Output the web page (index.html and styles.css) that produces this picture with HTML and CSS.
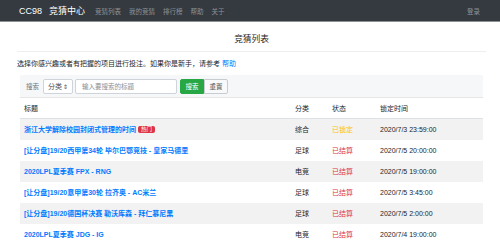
FILE: index.html
```html
<!DOCTYPE html>
<html lang="zh-CN">
<head>
    <meta charset="UTF-8">
    <meta name="viewport" content="width=device-width, initial-scale=1.0">
    <title>CC98 竞猜中心</title>
    <link rel="stylesheet" href="styles.css">
</head>
<body>
    <nav class="navbar">
        <a class="brand" href="#">CC98</a>
        <a class="brand brand-sub" href="#">竞猜中心</a>
        <div class="nav-links">
            <a href="#">竞猜列表</a>
            <a href="#">我的竞猜</a>
            <a href="#">排行榜</a>
            <a href="#">帮助</a>
            <a href="#">关于</a>
        </div>
        <a class="login" href="#">登录</a>
    </nav>

    <div class="container">
        <h2 class="page-title">竞猜列表</h2>
        <p class="intro">选择你感兴趣或者有把握的项目进行投注。如果你是新手，请参考 <a href="#">帮助</a></p>

        <form class="search-bar">
            <span class="search-label">搜索</span>
            <div class="select">分类 <span class="arrows">&#8661;</span></div>
            <input type="text" placeholder="输入要搜索的标题">
            <button type="submit" class="btn-search">搜索</button>
            <button type="button" class="btn-reset">重置</button>
        </form>

        <table class="bet-table">
            <colgroup>
                <col class="col-title">
                <col class="col-cat">
                <col class="col-state">
                <col class="col-time">
            </colgroup>
            <thead>
                <tr>
                    <th>标题</th>
                    <th>分类</th>
                    <th>状态</th>
                    <th>锁定时间</th>
                </tr>
            </thead>
            <tbody>
                <tr>
                    <td><a href="#">浙江大学解除校园封闭式管理的时间</a> <span class="badge">热门</span></td>
                    <td>综合</td>
                    <td class="locked">已锁定</td>
                    <td>2020/7/3 23:59:00</td>
                </tr>
                <tr>
                    <td><a href="#">[让分盘]19/20西甲第34轮 毕尔巴鄂竞技 - 皇家马德里</a></td>
                    <td>足球</td>
                    <td class="settled">已结算</td>
                    <td>2020/7/5 20:00:00</td>
                </tr>
                <tr>
                    <td><a href="#">2020LPL夏季赛 FPX - RNG</a></td>
                    <td>电竞</td>
                    <td class="settled">已结算</td>
                    <td>2020/7/5 19:00:00</td>
                </tr>
                <tr>
                    <td><a href="#">[让分盘]19/20意甲第30轮 拉齐奥 - AC米兰</a></td>
                    <td>足球</td>
                    <td class="settled">已结算</td>
                    <td>2020/7/5 3:45:00</td>
                </tr>
                <tr>
                    <td><a href="#">[让分盘]19/20德国杯决赛 勒沃库森 - 拜仁慕尼黑</a></td>
                    <td>足球</td>
                    <td class="settled">已结算</td>
                    <td>2020/7/5 2:00:00</td>
                </tr>
                <tr>
                    <td><a href="#">2020LPL夏季赛 JDG - IG</a></td>
                    <td>电竞</td>
                    <td class="settled">已结算</td>
                    <td>2020/7/4 19:00:00</td>
                </tr>
            </tbody>
        </table>
    </div>
</body>
</html>
```

FILE: styles.css
```css
body {
    margin: 0;
    font-family: "Liberation Sans", "Noto Sans CJK SC", sans-serif;
    font-size: 7px;
    color: #212529;
    background: #fff;
}
a {
    text-decoration: none;
    color: #007bff;
}
.navbar {
    display: flex;
    align-items: center;
    height: 22px;
    padding: 0 20px 0 19px;
    background-color: #343a40;
    border-bottom: 1px solid #8e9194;
    box-sizing: border-box;
}
.brand {
    color: #fff;
    font-size: 9px;
    margin-right: 7px;
}
.brand-sub {
    margin-right: 10px;
}
.nav-links {
    display: flex;
    gap: 8px;
    flex: 1;
}
.nav-links a,
.login {
    color: rgba(255,255,255,0.45);
    font-size: 6.5px;
}
.container {
    padding: 0 14px 0 17px;
}
.page-title {
    margin: 0;
    padding: 11px 0 6px;
    font-size: 8.7px;
    font-weight: normal;
    text-align: center;
    line-height: 12px;
    border-bottom: 1px solid #eee;
}
.intro {
    margin: 6px 0 0;
    line-height: 11px;
}
.search-bar {
    display: flex;
    align-items: center;
    margin: 6px 3px 0;
    padding: 4px 6px;
    height: 23px;
    box-sizing: border-box;
    background-color: #f6f7f8;
    border-bottom: 1px solid #e6e6e6;
}
.search-label {
    color: #6c757d;
    font-size: 6.5px;
    margin-right: 4px;
}
.select {
    display: flex;
    align-items: center;
    justify-content: space-between;
    width: 30px;
    height: 15px;
    padding: 0 4px;
    box-sizing: border-box;
    background: #fff;
    border: 1px solid #ced4da;
    border-radius: 2px;
    color: #495057;
    margin-right: 2px;
}
.arrows {
    font-size: 6px;
}
.search-bar input {
    width: 102px;
    height: 15px;
    padding: 0 6px;
    box-sizing: border-box;
    border: 1px solid #ced4da;
    border-radius: 2px;
    font: inherit;
    font-size: 6.5px;
    margin-right: 3px;
}
.search-bar input::placeholder {
    color: #8a9097;
}
.search-bar button {
    height: 15px;
    width: 24px;
    padding: 0;
    font: inherit;
    font-size: 6.5px;
    border: 1px solid #28a745;
    cursor: pointer;
}
.btn-search {
    background-color: #28a745;
    color: #fff;
    border-radius: 2px 0 0 2px;
}
.btn-reset {
    background-color: #f8f9fa;
    color: #495057;
    border-color: #c8ccd0 !important;
    border-radius: 0 2px 2px 0;
}
.bet-table {
    width: 463px;
    margin: 0 3px;
    border-collapse: collapse;
    table-layout: fixed;
}
.col-title { width: 271px; }
.col-cat { width: 37px; }
.col-state { width: 48px; }
.col-time { width: 107px; }
.bet-table th,
.bet-table td {
    text-align: left;
    padding: 5px 4px;
    line-height: 11px;
    white-space: nowrap;
}
.bet-table th {
    font-weight: normal;
    padding: 5px 4px 4px;
    border-bottom: 1px solid #dee2e6;
}
.bet-table tbody tr:nth-child(odd) {
    background-color: #f2f2f2;
}
.bet-table tbody tr:last-child td {
    border-bottom: 1px solid #dee2e6;
}
.bet-table td a {
    font-weight: bold;
}
.badge {
    display: inline-block;
    padding: 0 3px;
    line-height: 7px;
    font-size: 5.5px;
    color: #fff;
    background-color: #dc3545;
    border-radius: 2px;
    vertical-align: 1px;
}
.locked {
    color: #ffc107;
}
.settled {
    color: #dc3545;
}
```
